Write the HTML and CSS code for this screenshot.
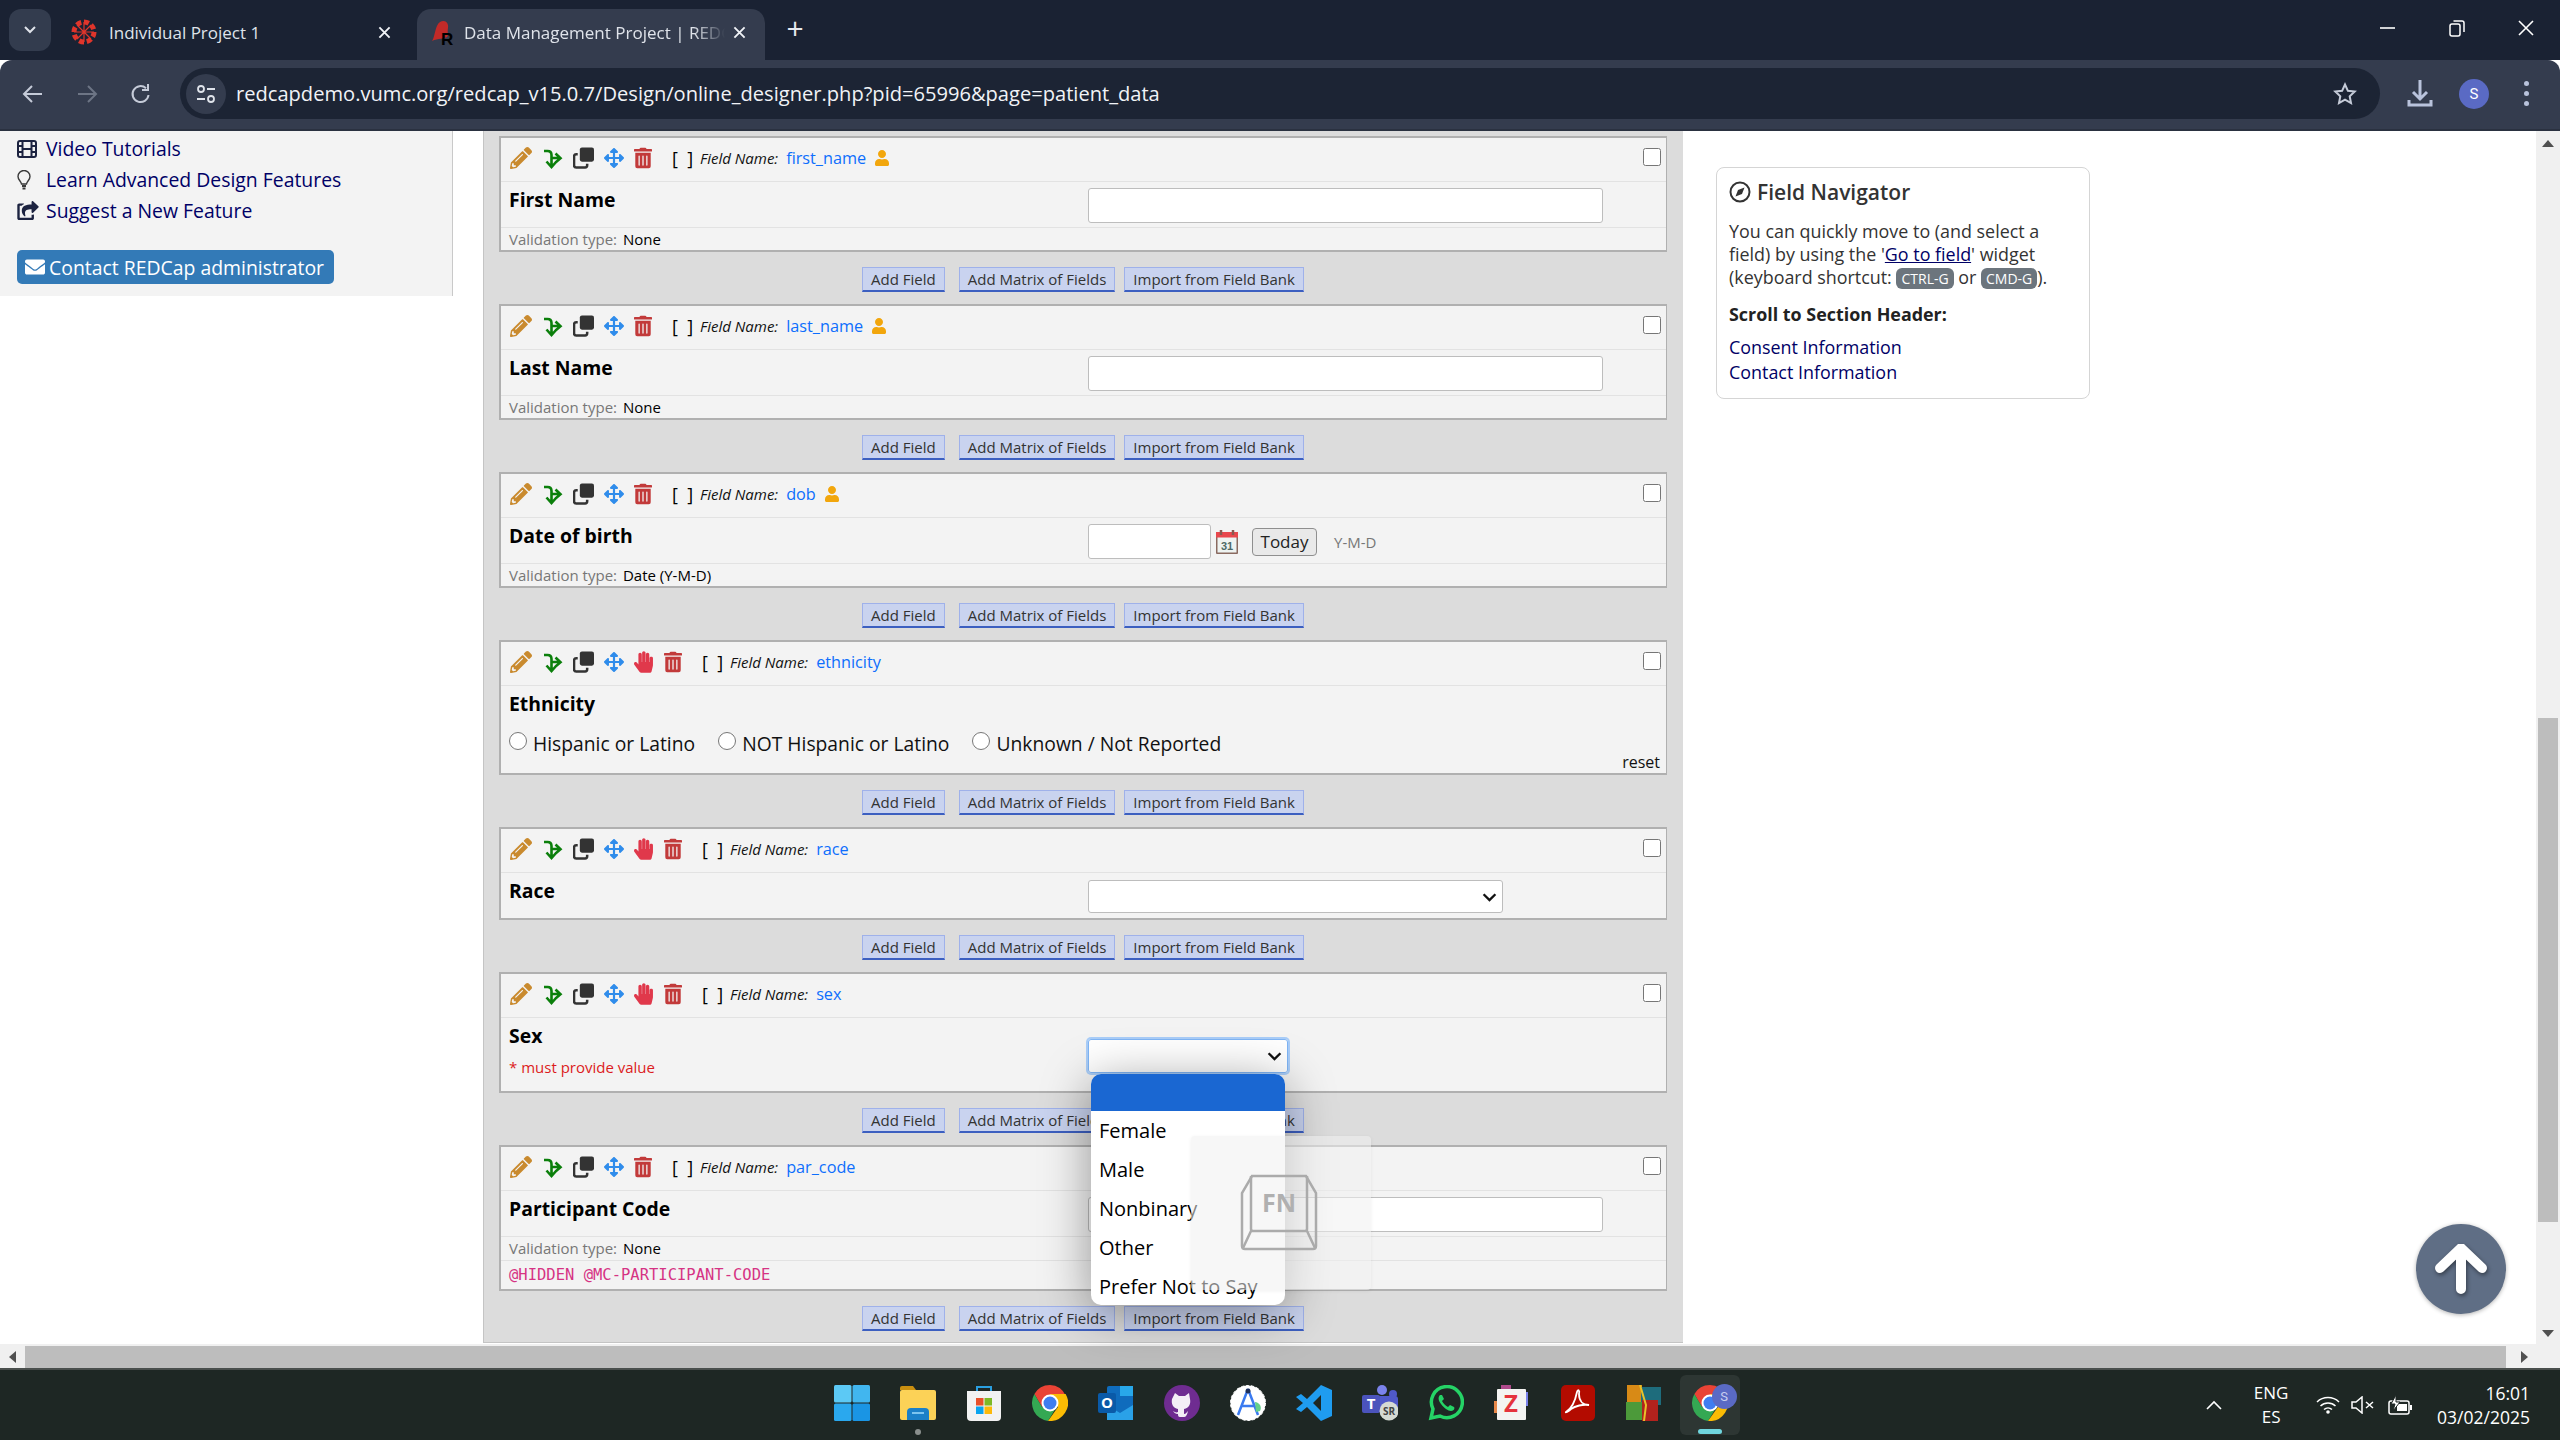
FILE: index.html
```html
<!DOCTYPE html>
<html>
    <head>
        <title>Data Management Project | REDCap</title>
        <link rel="stylesheet" href="styles.css">
    </head>
    <body>
<svg class="defs" width="0" height="0">
    <symbol id="i-pencil" viewBox="0 0 512 512"><path fill="#c98a2e" d="M497.9 142.1l-46.1 46.1c-4.7 4.7-12.3 4.7-17 0l-111-111c-4.7-4.7-4.7-12.3 0-17l46.1-46.1c18.7-18.7 49.1-18.7 67.9 0l60.1 60.1c18.8 18.7 18.8 49.1 0 67.9zM284.2 99.8L21.6 362.4.4 483.9c-2.9 16.4 11.4 30.6 27.8 27.8l121.5-21.3 262.6-262.6c4.7-4.7 4.7-12.3 0-17l-111-111c-4.8-4.7-12.4-4.7-17.1 0zM124.1 339.9c-5.5-5.5-5.5-14.3 0-19.8l154-154c5.5-5.5 14.3-5.5 19.8 0s5.5 14.3 0 19.8l-154 154c-5.5 5.5-14.3 5.5-19.8 0zM88 424h48v36.3l-64.5 11.3-31.1-31.1L51.7 376H88v48z"/></symbol>
    <symbol id="i-branch" viewBox="0 0 20 20"><path fill="none" stroke="#0b7f0b" stroke-width="2.6" d="M1 2h3.500Q8.500 2 8.500 6V17M3.500 12.500l5 5.500 5-5.500M8.500 9H17M12.500 4.500l5 4.700-5 4.300"/></symbol>
    <symbol id="i-copy" viewBox="0 0 20 20"><rect x="6.500" y="0" width="13.500" height="13.500" rx="2" fill="#333"/><path d="M4.500 6.500H3a2 2 0 0 0-2 2V17a2 2 0 0 0 2 2h8.500a2 2 0 0 0 2-2v-1.500" fill="none" stroke="#333" stroke-width="2.400"/></symbol>
    <symbol id="i-move" viewBox="0 0 512 512"><path fill="#2f8ceb" d="M352.201 425.775l-79.196 79.196c-9.373 9.373-24.568 9.373-33.941 0l-79.196-79.196c-15.119-15.119-4.411-40.971 16.971-40.97h51.162L228 284H127.196v51.162c0 21.382-25.851 32.09-40.971 16.971L7.029 272.937c-9.373-9.373-9.373-24.569 0-33.941L86.225 159.8c15.119-15.119 40.971-4.411 40.971 16.971V228H228V127.196h-51.23c-21.382 0-32.09-25.851-16.971-40.971l79.196-79.196c9.373-9.373 24.568-9.373 33.941 0l79.196 79.196c15.119 15.119 4.411 40.971-16.971 40.971h-51.162V228h100.804v-51.162c0-21.382 25.851-32.09 40.97-16.971l79.196 79.196c9.373 9.373 9.373 24.569 0 33.941L425.773 352.2c-15.119 15.119-40.971 4.411-40.97-16.971V284H284v100.804h51.23c21.382 0 32.09 25.851 16.971 40.971z"/></symbol>
    <symbol id="i-hand" viewBox="0 0 448 512"><path fill="#e0384b" d="M408.781 128.007C386.356 127.578 368 146.36 368 168.79V256h-8V79.79c0-22.43-18.356-41.212-40.781-40.783C297.488 39.423 280 57.169 280 79v177h-8V40.79C272 18.36 253.644-.422 231.219.007 209.488.423 192 18.169 192 40v216h-8V80.79c0-22.43-18.356-41.212-40.781-40.783C121.488 40.423 104 58.169 104 80v235.992l-31.648-43.519c-12.993-17.866-38.009-21.817-55.877-8.823-17.865 12.994-21.815 38.01-8.822 55.877l125.601 172.705A48 48 0 0 0 171.073 512h197.59c22.274 0 41.622-15.324 46.724-37.006l26.508-112.66a192.011 192.011 0 0 0 5.104-43.975V168c.001-21.831-17.487-39.577-39.218-39.993z"/></symbol>
    <symbol id="i-trash" viewBox="0 0 448 512"><path fill="#c23a3a" d="M32 464a48 48 0 0 0 48 48h288a48 48 0 0 0 48-48V128H32zm272-256a16 16 0 0 1 32 0v224a16 16 0 0 1-32 0zm-96 0a16 16 0 0 1 32 0v224a16 16 0 0 1-32 0zm-96 0a16 16 0 0 1 32 0v224a16 16 0 0 1-32 0zM432 32H312l-9.400-18.700A24 24 0 0 0 281.100 0H166.800a23.720 23.720 0 0 0-21.400 13.300L136 32H16A16 16 0 0 0 0 48v32a16 16 0 0 0 16 16h416a16 16 0 0 0 16-16V48a16 16 0 0 0-16-16z"/></symbol>
    <symbol id="i-user" viewBox="0 0 448 512"><path fill="#f2a60c" d="M224 256c70.700 0 128-57.300 128-128S294.700 0 224 0 96 57.300 96 128s57.300 128 128 128zm89.600 32h-16.700c-22.200 10.200-46.900 16-72.900 16s-50.600-5.800-72.900-16h-16.700C60.200 288 0 348.200 0 422.400V464c0 26.500 21.500 48 48 48h352c26.500 0 48-21.500 48-48v-41.600c0-74.200-60.200-134.400-134.400-134.400z"/></symbol>
    <symbol id="i-chrome" viewBox="0 0 36 36">
        <path fill="#ea4335" d="M18 0A18 18 0 0 0 2.400 9L10 22 18 10.500H33.600A18 18 0 0 0 18 0Z"/>
        <path fill="#34a853" d="M2.400 9A18 18 0 0 0 16 35.900L24.500 22 10 22Z"/>
        <path fill="#fbbc04" d="M33.600 9H18L26 22 16 35.900A18 18 0 0 0 33.600 9Z"/>
        <circle cx="18" cy="18" r="8.500" fill="#fff"/><circle cx="18" cy="18" r="6.500" fill="#3f7df0"/>
    </symbol>
    <symbol id="i-tabx" viewBox="0 0 14 14"><path d="M1.500 1.500l11 11M12.500 1.500l-11 11" stroke="#f1f3f7" stroke-width="2"/></symbol>
    <symbol id="i-chev" viewBox="0 0 14 10"><path d="M1.500 2l5.500 5.500L12.500 2" fill="none" stroke="#111" stroke-width="2.200"/></symbol>
</svg>

<div class="tabstrip">
    <div class="tablist"><svg width="14" height="14" viewBox="0 0 14 14"><path d="M2 4l5 5 5-5" fill="none" stroke="#dfe3ea" stroke-width="2"/></svg></div>
    <div class="tab">
        <svg class="favicon" width="26" height="26" viewBox="0 0 26 26"><circle cx="13" cy="13" r="10" fill="none" stroke="#e0352b" stroke-width="5" stroke-dasharray="5 2.800"/><path d="M13 3v20M3 13h20M6 6l14 14M20 6L6 20" stroke="#e0352b" stroke-width="1.200"/></svg>
        <span class="tab-title">Individual Project 1</span>
        <svg class="tab-x"><use href="#i-tabx"/></svg>
    </div>
    <div class="tab active">
        <svg class="favicon" width="26" height="26" viewBox="0 0 26 26"><path d="M2 22C5 18 5 6 10 3c5-3 9 1 8 6s1 7-1 9-9 1-15 4z" fill="#c22a28"/><text x="11" y="26" class="fav-r">R</text></svg>
        <span class="tab-title fade">Data Management Project | REDCap</span>
        <svg class="tab-x"><use href="#i-tabx"/></svg>
    </div>
    <div class="newtab">+</div>
    <div class="winctl">
        <svg width="16" height="16" viewBox="0 0 16 16"><path d="M0 8h15" stroke="#fff" stroke-width="1.600"/></svg>
        <svg width="16" height="18" viewBox="0 0 16 18"><rect x="1" y="5" width="10" height="12" rx="2" fill="none" stroke="#fff" stroke-width="1.500"/><path d="M4.500 2H13a2 2 0 0 1 2 2v9" fill="none" stroke="#fff" stroke-width="1.500"/></svg>
        <svg width="16" height="16" viewBox="0 0 16 16"><path d="M1 1l14 14M15 1L1 15" stroke="#fff" stroke-width="1.600"/></svg>
    </div>
</div>

<div class="toolbar">
    <svg class="nav" width="24" height="24" viewBox="0 0 24 24"><path d="M21 12H4M11 4l-8 8 8 8" fill="none" stroke="#c5cbd8" stroke-width="2"/></svg>
    <svg class="nav" width="24" height="24" viewBox="0 0 24 24"><path d="M3 12h17M13 4l8 8-8 8" fill="none" stroke="#6d7585" stroke-width="2"/></svg>
    <svg class="nav" width="24" height="24" viewBox="0 0 24 24"><path d="M19.500 13a8 8 0 1 1-2.500-6.800" fill="none" stroke="#c5cbd8" stroke-width="2"/><path d="M19 2v6h-6" fill="none" stroke="#c5cbd8" stroke-width="2"/></svg>
    <div class="omnibox">
        <span class="site-chip"><svg width="22" height="22" viewBox="0 0 22 22"><circle cx="6" cy="6" r="3" fill="none" stroke="#dfe3ea" stroke-width="1.800"/><path d="M12 6h8M2 16h8" stroke="#dfe3ea" stroke-width="1.800"/><circle cx="16" cy="16" r="3" fill="none" stroke="#dfe3ea" stroke-width="1.800"/></svg></span>
        <span class="url">redcapdemo.vumc.org/redcap_v15.0.7/Design/online_designer.php?pid=65996&amp;page=patient_data</span>
        <svg class="star" width="24" height="24" viewBox="0 0 24 24"><path d="M12 2.500l2.900 6.300 6.800.8-5 4.700 1.300 6.800-6-3.400-6 3.400 1.300-6.800-5-4.700 6.800-.8z" fill="none" stroke="#c5cbd8" stroke-width="2"/></svg>
    </div>
    <svg class="download" width="26" height="30" viewBox="0 0 26 30"><path d="M13 1v19M6 13l7 7 7-7" fill="none" stroke="#b9c3dc" stroke-width="3"/><path d="M2 21v5h22v-5" fill="none" stroke="#b9c3dc" stroke-width="3"/></svg>
    <span class="avatar">S</span>
    <span class="dots"><i></i><i></i><i></i></span>
</div>

<div class="page">
    <div class="sidebar">
        <div class="side-top">
            <div class="side-link"><span class="side-ico"></span>Help &amp; FAQ</div>
            <div class="side-link">
                <span class="side-ico"><svg width="20" height="18" viewBox="0 0 20 18"><rect x="1" y="1" width="18" height="16" rx="2" fill="none" stroke="#1c2340" stroke-width="2"/><path d="M5.500 1v16M14.500 1v16M1 6h4M1 12h4M15 6h4M15 12h4M6 9h8" stroke="#1c2340" stroke-width="2"/></svg></span>Video Tutorials
            </div>
            <div class="side-link">
                <span class="side-ico"><svg width="14" height="20" viewBox="0 0 14 20"><path d="M4.500 14C4 11 1 10 1 6.500a6 6 0 0 1 12 0C13 10 10 11 9.500 14z" fill="none" stroke="#3a3a3a" stroke-width="1.400"/><path d="M5 16h4M5.500 18.500h3" stroke="#3a3a3a" stroke-width="1.800"/></svg></span>Learn Advanced Design Features
            </div>
            <div class="side-link">
                <span class="side-ico"><svg width="22" height="19" viewBox="0 0 576 512"><path fill="#1c2340" d="M568.482 177.448L424.479 313.433C409.3 327.768 384 317.14 384 295.985v-71.963c-144.575.97-205.566 35.113-164.775 171.353 4.483 14.973-12.846 26.567-25.006 17.33C155.252 383.105 120 326.488 120 269.339c0-143.937 117.599-172.5 264-173.312V24.012c0-21.174 25.317-31.768 40.479-17.448l144.003 135.988c10.02 9.463 10.028 25.425 0 34.896zM384 379.128V448H64V128h50.916a11.990 11.990 0 0 0 8.648-3.693c14.953-15.568 32.237-27.890 51.014-37.676C186.708 80.069 182.238 64 170.239 64H48C21.490 64 0 85.490 0 112v352c0 26.510 21.490 48 48 48h352c26.510 0 48-21.490 48-48v-88.806c0-8.288-8.197-13.066-15.973-10.394-10.900 3.753-22.600 5.200-32.027 4.200-5.400-.600-16 .200-16 11.128z"/></svg></span>Suggest a New Feature
            </div>
            <div class="contact"><svg width="20" height="16" viewBox="0 64 512 384"><path fill="#fff" d="M502.300 190.800c3.900-3.100 9.700-.200 9.700 4.700V400c0 26.500-21.500 48-48 48H48c-26.500 0-48-21.500-48-48V195.600c0-5 5.700-7.800 9.700-4.700 22.400 17.400 52.100 39.500 154.100 113.600 21.100 15.400 56.700 47.800 92.200 47.600 35.700.300 72-32.800 92.300-47.600 102-74.100 131.600-96.300 154-113.700zM256 320c23.200.400 56.600-29.200 73.400-41.400 132.700-96.300 142.800-104.700 173.400-128.700 5.800-4.500 9.200-11.500 9.200-18.900v-19c0-26.500-21.500-48-48-48H48C21.500 64 0 85.500 0 112v19c0 7.400 3.400 14.300 9.200 18.900 30.600 23.900 40.700 32.400 173.400 128.700 16.800 12.200 50.200 41.800 73.400 41.400z"/></svg>Contact REDCap administrator</div>
        </div>
    </div>

    <div class="main">
        <div class="field">
            <div class="f-head">
                <svg class="i-pencil"><use href="#i-pencil"/></svg><svg class="i-branch"><use href="#i-branch"/></svg><svg class="i-copy"><use href="#i-copy"/></svg><svg class="i-move"><use href="#i-move"/></svg><svg class="i-trash"><use href="#i-trash"/></svg>
                <span class="brackets">[ &nbsp;]</span><em class="fn-label">Field Name:</em><span class="fn-var">first_name</span><svg class="i-user"><use href="#i-user"/></svg>
                <input class="f-check" type="checkbox">
            </div>
            <div class="f-body">
                <div class="f-label">First Name</div>
                <input class="txt" type="text">
            </div>
            <div class="f-valid"><span class="v-key">Validation type:</span> None</div>
        </div>
        <div class="add-row"><span class="add-btn">Add Field</span><span class="add-btn">Add Matrix of Fields</span><span class="add-btn">Import from Field Bank</span></div>

        <div class="field">
            <div class="f-head">
                <svg class="i-pencil"><use href="#i-pencil"/></svg><svg class="i-branch"><use href="#i-branch"/></svg><svg class="i-copy"><use href="#i-copy"/></svg><svg class="i-move"><use href="#i-move"/></svg><svg class="i-trash"><use href="#i-trash"/></svg>
                <span class="brackets">[ &nbsp;]</span><em class="fn-label">Field Name:</em><span class="fn-var">last_name</span><svg class="i-user"><use href="#i-user"/></svg>
                <input class="f-check" type="checkbox">
            </div>
            <div class="f-body">
                <div class="f-label">Last Name</div>
                <input class="txt" type="text">
            </div>
            <div class="f-valid"><span class="v-key">Validation type:</span> None</div>
        </div>
        <div class="add-row"><span class="add-btn">Add Field</span><span class="add-btn">Add Matrix of Fields</span><span class="add-btn">Import from Field Bank</span></div>

        <div class="field">
            <div class="f-head">
                <svg class="i-pencil"><use href="#i-pencil"/></svg><svg class="i-branch"><use href="#i-branch"/></svg><svg class="i-copy"><use href="#i-copy"/></svg><svg class="i-move"><use href="#i-move"/></svg><svg class="i-trash"><use href="#i-trash"/></svg>
                <span class="brackets">[ &nbsp;]</span><em class="fn-label">Field Name:</em><span class="fn-var">dob</span><svg class="i-user"><use href="#i-user"/></svg>
                <input class="f-check" type="checkbox">
            </div>
            <div class="f-body">
                <div class="f-label">Date of birth</div>
                <div class="date-wrap">
                    <input class="txt date" type="text">
                    <svg class="cal" width="22" height="24" viewBox="0 0 22 24"><rect x="0" y="2" width="22" height="22" rx="1" fill="#8a6a60"/><rect x="1.500" y="7" width="19" height="15.500" fill="#eef3f1"/><rect x="0" y="2" width="22" height="5.500" fill="#e8474c"/><path d="M5 0v5M17 0v5" stroke="#8a5a50" stroke-width="2.500"/><text x="11" y="19.500" class="cal-num">31</text></svg>
                    <span class="today">Today</span>
                    <span class="ymd">Y-M-D</span>
                </div>
            </div>
            <div class="f-valid"><span class="v-key">Validation type:</span> Date (Y-M-D)</div>
        </div>
        <div class="add-row"><span class="add-btn">Add Field</span><span class="add-btn">Add Matrix of Fields</span><span class="add-btn">Import from Field Bank</span></div>

        <div class="field">
            <div class="f-head">
                <svg class="i-pencil"><use href="#i-pencil"/></svg><svg class="i-branch"><use href="#i-branch"/></svg><svg class="i-copy"><use href="#i-copy"/></svg><svg class="i-move"><use href="#i-move"/></svg><svg class="i-hand"><use href="#i-hand"/></svg><svg class="i-trash"><use href="#i-trash"/></svg>
                <span class="brackets">[ &nbsp;]</span><em class="fn-label">Field Name:</em><span class="fn-var">ethnicity</span>
                <input class="f-check" type="checkbox">
            </div>
            <div class="f-body eth">
                <div class="f-label">Ethnicity</div>
                <div class="radios">
                    <label class="radio"><input type="radio" name="eth">Hispanic or Latino</label>
                    <label class="radio"><input type="radio" name="eth">NOT Hispanic or Latino</label>
                    <label class="radio"><input type="radio" name="eth">Unknown / Not Reported</label>
                </div>
                <span class="reset">reset</span>
            </div>
        </div>
        <div class="add-row"><span class="add-btn">Add Field</span><span class="add-btn">Add Matrix of Fields</span><span class="add-btn">Import from Field Bank</span></div>

        <div class="field">
            <div class="f-head">
                <svg class="i-pencil"><use href="#i-pencil"/></svg><svg class="i-branch"><use href="#i-branch"/></svg><svg class="i-copy"><use href="#i-copy"/></svg><svg class="i-move"><use href="#i-move"/></svg><svg class="i-hand"><use href="#i-hand"/></svg><svg class="i-trash"><use href="#i-trash"/></svg>
                <span class="brackets">[ &nbsp;]</span><em class="fn-label">Field Name:</em><span class="fn-var">race</span>
                <input class="f-check" type="checkbox">
            </div>
            <div class="f-body race">
                <div class="f-label">Race</div>
                <div class="sel-wrap race-sel"><select class="sel"><option></option></select><svg class="chev"><use href="#i-chev"/></svg></div>
            </div>
        </div>
        <div class="add-row"><span class="add-btn">Add Field</span><span class="add-btn">Add Matrix of Fields</span><span class="add-btn">Import from Field Bank</span></div>

        <div class="field">
            <div class="f-head">
                <svg class="i-pencil"><use href="#i-pencil"/></svg><svg class="i-branch"><use href="#i-branch"/></svg><svg class="i-copy"><use href="#i-copy"/></svg><svg class="i-move"><use href="#i-move"/></svg><svg class="i-hand"><use href="#i-hand"/></svg><svg class="i-trash"><use href="#i-trash"/></svg>
                <span class="brackets">[ &nbsp;]</span><em class="fn-label">Field Name:</em><span class="fn-var">sex</span>
                <input class="f-check" type="checkbox">
            </div>
            <div class="f-body sex">
                <div>
                    <div class="f-label">Sex</div>
                    <div class="must">* must provide value</div>
                </div>
                <div class="sel-wrap sex-sel"><select class="sel"><option></option></select><svg class="chev"><use href="#i-chev"/></svg></div>
            </div>
        </div>
        <div class="add-row"><span class="add-btn">Add Field</span><span class="add-btn">Add Matrix of Fields</span><span class="add-btn">Import from Field Bank</span></div>

        <div class="field">
            <div class="f-head">
                <svg class="i-pencil"><use href="#i-pencil"/></svg><svg class="i-branch"><use href="#i-branch"/></svg><svg class="i-copy"><use href="#i-copy"/></svg><svg class="i-move"><use href="#i-move"/></svg><svg class="i-trash"><use href="#i-trash"/></svg>
                <span class="brackets">[ &nbsp;]</span><em class="fn-label">Field Name:</em><span class="fn-var">par_code</span>
                <input class="f-check" type="checkbox">
            </div>
            <div class="f-body">
                <div class="f-label">Participant Code</div>
                <input class="txt" type="text">
            </div>
            <div class="f-valid mid"><span class="v-key">Validation type:</span> None</div>
            <div class="f-tags">@HIDDEN @MC-PARTICIPANT-CODE</div>
        </div>
        <div class="add-row"><span class="add-btn">Add Field</span><span class="add-btn">Add Matrix of Fields</span><span class="add-btn">Import from Field Bank</span></div>
    </div>

    <div class="navigator">
        <div class="nav-title"><svg width="22" height="22" viewBox="0 0 22 22"><circle cx="11" cy="11" r="9.500" fill="none" stroke="#333" stroke-width="2"/><path d="M15.500 6.500l-2.500 6.500-6.500 2.500 2.500-6.500z" fill="#333"/></svg>Field Navigator</div>
        <p class="nav-text">You can quickly move to (and select a field) by using the '<a class="goto">Go to field</a>' widget (keyboard shortcut: <span class="kbd">CTRL-G</span> or <span class="kbd">CMD-G</span>).</p>
        <div class="nav-head">Scroll to Section Header:</div>
        <div class="nav-link">Consent Information</div>
        <div class="nav-link">Contact Information</div>
    </div>

    <div class="vscroll">
        <span class="arrow-up"></span>
        <div class="v-track"><div class="v-thumb"></div></div>
        <span class="arrow-down"></span>
    </div>

    <div class="to-top"><svg width="52" height="50" viewBox="0 0 52 50"><path d="M26 4v41M5 24L26 4l21 20" fill="none" stroke="#fff" stroke-width="10" stroke-linecap="round" stroke-linejoin="round"/></svg></div>
</div>

<div class="hscroll">
    <span class="arrow-left"></span>
    <div class="h-thumb"></div>
    <span class="arrow-right"></span>
    <span class="corner"></span>
</div>

<div class="taskbar">
    <div class="apps">
        <svg class="app" viewBox="0 0 36 36"><rect x="0" y="0" width="17.500" height="17.500" rx="1.500" fill="#5cc9f5"/><rect x="18.500" y="0" width="17.500" height="17.500" rx="1.500" fill="#41b6ef"/><rect x="0" y="18.500" width="17.500" height="17.500" rx="1.500" fill="#2aa8ee"/><rect x="18.500" y="18.500" width="17.500" height="17.500" rx="1.500" fill="#1a95e4"/></svg>
        <svg class="app" viewBox="0 0 36 36"><path d="M0 3a2 2 0 0 1 2-2h11l3 4H0z" fill="#c98f10"/><rect x="0" y="5" width="36" height="30" rx="2" fill="#fcd257"/><path d="M7 35V27a4 4 0 0 1 4-4h14a4 4 0 0 1 4 4v8z" fill="#1b80c8"/><rect x="12" y="27" width="12" height="2" fill="#7cc4ef"/></svg>
        <svg class="app" viewBox="0 0 36 36"><path d="M11 7V2h14v5" fill="none" stroke="#2a9fe0" stroke-width="2"/><path d="M1 6h34v26a4 4 0 0 1-4 4H5a4 4 0 0 1-4-4z" fill="#f2f2f2"/><rect x="10" y="13" width="7.500" height="7.500" fill="#e8502a"/><rect x="18.500" y="13" width="7.500" height="7.500" fill="#7db927"/><rect x="10" y="21.500" width="7.500" height="7.500" fill="#0aa4ef"/><rect x="18.500" y="21.500" width="7.500" height="7.500" fill="#fcb90a"/></svg>
        <svg class="app"><use href="#i-chrome"/></svg>
        <svg class="app" viewBox="0 0 36 36"><rect x="9" y="1" width="26" height="34" rx="2" fill="#0f6cbd"/><rect x="22" y="1" width="13" height="10" fill="#28a8ea"/><path d="M9 20l13 8 13-8v15H9z" fill="#2aa1e8"/><rect x="0" y="8" width="18" height="20" rx="2" fill="#0a5aa8"/><text x="9" y="23" class="ol">O</text></svg>
        <svg class="app" viewBox="0 0 36 36"><circle cx="18" cy="18" r="18" fill="#6f2c91"/><path d="M11 8l4 3h6l4-3 1 6c1 5-1 9-6 10v5c2 0 2-1 4-3-1 4-2 6-4 6h-4c-2 0-2-2-2-3-3 0-4-2-5-3 2 1 3 2 5 1v-3c-5-1-7-5-6-10z" fill="#fff" fill-opacity=".92"/></svg>
        <svg class="app" viewBox="0 0 36 36"><circle cx="18" cy="18" r="17.500" fill="#fff" stroke="#fff" stroke-dasharray="3 2" stroke-width="1"/><path d="M18 4L8 30M18 4l10 26M11 21h14" fill="none" stroke="#3a7af0" stroke-width="2.500"/><circle cx="18" cy="6" r="2.500" fill="#1d2f5a"/><path d="M25 17a6 6 0 0 1 5 9l-4 1z" fill="#63d08a"/></svg>
        <svg class="app" viewBox="0 0 36 36"><path d="M25 0l11 5v26l-11 5-14-14-6 5-5-3 7-6-7-6 5-3 6 5zM25 10l-8 8 8 8z" fill="#1f9cf0" fill-rule="evenodd"/></svg>
        <svg class="app" viewBox="0 0 36 36"><circle cx="20" cy="5" r="5" fill="#7b83eb"/><circle cx="31" cy="9" r="4" fill="#5059c9"/><rect x="15" y="11" width="21" height="16" rx="3" fill="#5059c9"/><rect x="0" y="10" width="18" height="18" rx="2" fill="#4b53bc"/><text x="9" y="24" class="t-letter">T</text><circle cx="27" cy="26" r="9.500" fill="#d5dad3"/><text x="27" y="30" class="sr">SR</text></svg>
        <svg class="app" viewBox="0 0 36 36"><path d="M3 33l2-9A15.500 15.500 0 1 1 12 31z" fill="none" stroke="#25d366" stroke-width="3.500"/><path d="M12 10c-2 2-2 5 1 9s7 7 10 7 4-3 3-4l-4-2-2 2c-2-1-5-4-6-6l2-2-2-4z" fill="#25d366"/></svg>
        <svg class="app" viewBox="0 0 36 36"><rect x="7" y="0" width="10" height="8" fill="#b04a8c"/><rect x="28" y="7" width="6" height="14" fill="#7b83eb"/><rect x="0" y="16" width="6" height="12" fill="#e8894a"/><rect x="3" y="4" width="29" height="31" rx="1" fill="#f4f4f2"/><text x="17" y="27" class="zot">Z</text></svg>
        <svg class="app" viewBox="0 0 36 36"><rect x="1" y="0" width="34" height="36" rx="5" fill="#b30b00"/><path d="M6 27c5-3 9-10 11-20 1-3 3-2 2 2 0 8 5 11 10 11-6-1-14 1-18 4-3 3-6 4-5 3z" fill="none" stroke="#fff" stroke-width="1.800"/></svg>
        <svg class="app" viewBox="0 0 36 36"><rect x="1" y="0" width="15" height="18" fill="#d88a16"/><rect x="15" y="2" width="20" height="18" fill="#1e6c7c"/><rect x="0" y="17" width="17" height="18" fill="#4c9a3a"/><rect x="16" y="15" width="16" height="21" fill="#b2221d"/><path d="M14 0l6 20-2 16" stroke="#e8c22a" stroke-width="2" fill="none"/></svg>
        <div class="app-active">
            <svg class="app"><use href="#i-chrome"/></svg>
            <span class="app-badge">S</span>
            <span class="app-bar"></span>
        </div>
    </div>
    <span class="explorer-dot"></span>
    <div class="tray">
        <svg width="16" height="10" viewBox="0 0 16 10"><path d="M1 9l7-7 7 7" fill="none" stroke="#fff" stroke-width="1.600"/></svg>
        <div class="lang"><div>ENG</div><div>ES</div></div>
        <svg width="24" height="18" viewBox="0 0 24 18"><path d="M1 6a16 16 0 0 1 22 0M4.500 10a11 11 0 0 1 15 0M8 13.500a6 6 0 0 1 8 0" fill="none" stroke="#fff" stroke-width="1.500"/><circle cx="12" cy="16" r="1.800" fill="#fff"/></svg>
        <svg class="speaker" width="24" height="18" viewBox="0 0 24 18"><path d="M1 6h4l6-5v16l-6-5H1z" fill="none" stroke="#fff" stroke-width="1.500"/><path d="M15 6l7 6M22 6l-7 6" stroke="#fff" stroke-width="1.500"/></svg>
        <svg width="24" height="20" viewBox="0 0 24 20"><rect x="1" y="6" width="20" height="13" rx="2" fill="none" stroke="#fff" stroke-width="1.500"/><rect x="22" y="10" width="2" height="5" fill="#fff"/><rect x="9" y="9" width="10" height="7" fill="#fff"/><path d="M8 0L3 9h4l-2 7 7-9H8z" fill="#fff" stroke="#1e2724"/></svg>
        <div class="clock"><div>16:01</div><div>03/02/2025</div></div>
    </div>
</div>

<div class="dropdown">
    <div class="opt picked"></div>
    <div class="opt">Female</div>
    <div class="opt">Male</div>
    <div class="opt">Nonbinary</div>
    <div class="opt">Other</div>
    <div class="opt">Prefer Not to Say</div>
</div>

<div class="fn-ghost">
    <svg width="78" height="78" viewBox="0 0 78 78"><path d="M12 2H66L76 19V72Q76 75 73 75H5Q2 75 2 72V19Z" fill="none" stroke="#ababab" stroke-width="2.500"/><path d="M11 2V55a2 2 0 0 0 2 2H65a2 2 0 0 0 2-2V2M11 57L3 74M67 57l8 17" fill="none" stroke="#ababab" stroke-width="2.500"/><text x="39" y="38" class="fn-key">FN</text></svg>
</div>
    </body>
</html>
```

FILE: styles.css
```css
body {
    margin: 0;
    width: 2560px;
    height: 1440px;
    overflow: hidden;
    position: relative;
    display: flex;
    flex-direction: column;
    font-family: "Open Sans", "Liberation Sans", sans-serif;
    background: #fff;
}
.defs {
    position: absolute;
}

/* browser chrome */
.tabstrip {
    height: 60px;
    background: #1a2233;
    display: flex;
    align-items: flex-end;
    color: #dfe3ea;
    font-size: 17px;
}
.tablist {
    width: 42px;
    height: 42px;
    margin: 0 0 9px 9px;
    border-radius: 12px;
    background: #333c4e;
    display: flex;
    align-items: center;
    justify-content: center;
}
.tab {
    width: 366px;
    height: 51px;
    display: flex;
    align-items: center;
    padding: 0 26px 5px 20px;
    box-sizing: border-box;
    flex: none;
}
.tab.active {
    width: 348px;
    background: #343c4e;
    border-radius: 14px 14px 0 0;
    padding-left: 13px;
    padding-right: 19px;
}
.favicon {
    flex: none;
    margin-right: 12px;
}
.active .favicon {
    margin-right: 8px;
}
.fav-r {
    font: bold 17px "Liberation Sans", sans-serif;
    fill: #000;
}
.tab-title {
    flex: 1;
    white-space: nowrap;
    overflow: hidden;
}
.tab-title.fade {
    -webkit-mask-image: linear-gradient(to right, #000 88%, transparent);
    mask-image: linear-gradient(to right, #000 88%, transparent);
}
.tab-x {
    width: 13px;
    height: 13px;
    flex: none;
    margin-left: 8px;
}
.newtab {
    width: 36px;
    margin: 0 0 14px 12px;
    font-size: 30px;
    line-height: 36px;
    color: #e6e9ef;
    text-align: center;
}
.winctl {
    margin: 0 26px 23px auto;
    display: flex;
    gap: 53px;
    align-items: center;
}
.toolbar {
    height: 71px;
    box-sizing: border-box;
    background: #343c4e;
    border-bottom: 2px solid #2a3140;
    border-radius: 12px 12px 0 0;
    display: flex;
    align-items: center;
    padding: 0 20px 2px 21px;
}
.nav {
    flex: none;
    margin-right: 30px;
}
.nav:nth-child(3) {
    margin-right: 27px;
}
.omnibox {
    flex: none;
    width: 2200px;
    height: 51px;
    background: #1c2434;
    border-radius: 26px;
    display: flex;
    align-items: center;
    color: #f1f3f7;
    font-size: 20.100px;
}
.site-chip {
    width: 40px;
    height: 40px;
    margin-left: 6px;
    border-radius: 50%;
    background: #343c4e;
    display: flex;
    align-items: center;
    justify-content: center;
}
.url {
    margin-left: 10px;
}
.star {
    margin-left: auto;
    margin-right: 23px;
}
.download {
    margin-left: 27px;
}
.avatar {
    width: 30px;
    height: 30px;
    margin-left: 26px;
    border-radius: 50%;
    background: #5a6ac4;
    color: #fff;
    font: 15px Roboto, sans-serif;
    display: flex;
    align-items: center;
    justify-content: center;
}
.dots {
    margin-left: 35px;
    display: flex;
    flex-direction: column;
    gap: 5px;
}
.dots i {
    width: 5px;
    height: 5px;
    border-radius: 50%;
    background: #b9c3dc;
}

/* page */
.page {
    height: 1213px;
    position: relative;
    overflow: hidden;
    display: flex;
    align-items: flex-start;
}
.sidebar {
    width: 453px;
    flex: none;
}
.side-top {
    margin-top: -31px;
    height: 196px;
    background: #f3f3f3;
    border-right: 1px solid #c9c9c9;
    box-sizing: border-box;
    padding-top: 2px;
}
.side-link {
    height: 31px;
    line-height: 31px;
    font-size: 19.400px;
    color: #000066;
    display: flex;
    align-items: center;
}
.side-ico {
    width: 29px;
    margin-left: 17px;
    flex: none;
    display: flex;
    align-items: center;
}
.side-ico svg {
    display: block;
}
.contact {
    width: 317px;
    height: 34px;
    margin: 24px 0 0 17px;
    background: #337ab7;
    border-radius: 5px;
    color: #fff;
    font-size: 19.400px;
    display: flex;
    align-items: center;
    padding-left: 8px;
    box-sizing: border-box;
    gap: 4px;
}
.main {
    width: 1200px;
    height: 1212px;
    flex: none;
    margin-left: 30px;
    box-sizing: border-box;
    padding: 5px 16px 0 15px;
    background: #dcdcdc;
    border-bottom: 1px solid #c4c4c4;
    border-left: 1px solid #c4c4c4;
}
.field {
    background: #f3f3f3;
    border: 2px solid #b0b0b0;
    border-width: 2px 1px 2px 2px;
}
.f-head {
    height: 44px;
    box-sizing: border-box;
    border-bottom: 1px solid #e2e2e2;
    display: flex;
    align-items: center;
    padding: 0 0 3px 9px;
    font-size: 16px;
}
.f-head > svg {
    flex: none;
    height: 22px;
}
.i-pencil {
    width: 22px;
    margin-right: 11px;
}
.i-branch {
    width: 20px;
    margin-right: 10px;
    position: relative;
    top: 1px;
}
.i-copy {
    width: 21px;
    margin-right: 10px;
}
.i-move {
    width: 20px;
    margin-right: 10px;
}
.i-hand {
    width: 19px;
    margin-right: 11px;
}
.i-trash {
    width: 18px;
    margin-right: 20px;
}
.f-head > .i-user {
    width: 14px;
    height: 16px;
    margin-left: 9px;
}
.brackets {
    width: 28px;
    font-size: 18px;
    color: #000;
}
.fn-label {
    font-size: 15px;
    color: #111;
    margin-right: 8px;
}
.fn-var {
    color: #0d6efd;
    font-size: 16.250px;
}
.f-check {
    width: 18px;
    height: 18px;
    margin: 0 5px 3px auto;
}
.f-body {
    height: 46px;
    box-sizing: border-box;
    border-bottom: 1px solid #e2e2e2;
    display: flex;
    justify-content: space-between;
    padding: 0 0 0 8px;
    position: relative;
}
.f-label {
    font-size: 19.400px;
    font-weight: bold;
    color: #000;
    line-height: 27px;
    margin-top: 4px;
}
.txt {
    width: 515px;
    height: 35px;
    margin: 6px 63px 0 0;
    padding: 0;
    box-sizing: border-box;
    border: 1px solid #bdbdbd;
    border-radius: 3px;
    background: #fff;
}
.date-wrap {
    width: 578px;
    height: 35px;
    margin-top: 6px;
    display: flex;
    align-items: center;
}
.txt.date {
    width: 123px;
    margin: 0 5px 0 0;
}
.cal-num {
    font: bold 11px "Liberation Sans", sans-serif;
    fill: #4d6a66;
    text-anchor: middle;
}
.today {
    width: 65px;
    height: 28px;
    margin-left: 14px;
    box-sizing: border-box;
    border: 1px solid #8f8f8f;
    border-radius: 4px;
    background: #e9e9e9;
    font-size: 17px;
    line-height: 26px;
    text-align: center;
    color: #222;
}
.ymd {
    margin-left: 17px;
    font-size: 15px;
    color: #777;
}
.f-valid {
    height: 22px;
    padding-left: 8px;
    font-size: 15px;
    line-height: 22px;
    color: #000;
}
.f-valid.mid {
    height: 23px;
    border-bottom: 1px solid #e2e2e2;
}
.v-key {
    color: #777;
    margin-right: 2px;
}
.f-tags {
    height: 28px;
    padding-left: 8px;
    font: 15.500px/28px "DejaVu Sans Mono", "Liberation Mono", monospace;
    color: #d63384;
}
.f-body.eth {
    height: 83px;
    border-bottom: 0;
    display: block;
}
.radios {
    display: flex;
    margin-top: 13px;
    font-size: 19.300px;
    color: #111;
}
.radio {
    display: flex;
    align-items: center;
    margin-right: 23px;
    line-height: 27px;
}
.radio input {
    width: 18px;
    height: 18px;
    margin: 0 6px 5px 0;
}
.reset {
    position: absolute;
    right: 6px;
    bottom: 0;
    font-size: 16px;
    color: #111;
}
.f-body.race {
    height: 45px;
    border-bottom: 0;
}
.sel-wrap {
    position: relative;
    height: 33px;
}
.sel {
    width: 100%;
    height: 100%;
    display: block;
    appearance: none;
    box-sizing: border-box;
    border: 1px solid #bdbdbd;
    border-radius: 3px;
    background: #fff;
}
.chev {
    position: absolute;
    right: 6px;
    top: 12px;
    width: 15px;
    height: 11px;
}
.race-sel {
    width: 415px;
    margin: 7px 163px 0 0;
}
.f-body.sex {
    height: 73px;
    border-bottom: 0;
}
.sex-sel {
    width: 200px;
    height: 34px;
    margin: 21px 378px 0 0;
    border-radius: 3px;
    box-shadow: 0 0 0 2px #a9cdf8;
}
.sex-sel .sel {
    border-color: #7fb5f5;
}
.must {
    font-size: 15px;
    color: #dc1c1c;
    margin-top: 8px;
}
.add-row {
    height: 25px;
    margin: 15px 0 12px;
    display: flex;
    justify-content: center;
    font-size: 15px;
    color: #333;
}
.add-btn {
    height: 25px;
    box-sizing: border-box;
    padding: 0 8px;
    line-height: 23px;
    background: #c9d3ef;
    border: 1px solid #9fb1ea;
    border-bottom: 2px solid #3c5fc0;
    white-space: nowrap;
}
.add-btn:nth-child(2) {
    margin: 0 9px 0 14px;
}

/* field navigator */
.navigator {
    width: 374px;
    height: 232px;
    margin: 36px 0 0 33px;
    flex: none;
    box-sizing: border-box;
    border: 1px solid #d5d5d5;
    border-radius: 8px;
    padding: 9px 12px;
    font-size: 18px;
    color: #333;
}
.nav-title {
    display: flex;
    align-items: center;
    gap: 6px;
    font-size: 21px;
    font-weight: 600;
    line-height: 30px;
    color: #333;
}
.nav-text {
    margin: 13px 0 0;
    line-height: 23px;
    font-size: 17.900px;
    color: #333;
}
.goto {
    color: #000066;
    text-decoration: underline;
}
.kbd {
    background: #6c757d;
    color: #fff;
    font-size: 14px;
    border-radius: 6px;
    padding: 1px 5px;
}
.nav-head {
    margin-top: 12px;
    font-size: 17.900px;
    font-weight: bold;
    color: #222;
    line-height: 24px;
}
.nav-link {
    font-size: 17.900px;
    color: #000066;
    line-height: 25px;
}
.nav-head + .nav-link {
    margin-top: 9px;
}

/* scrollbars */
.vscroll {
    width: 24px;
    height: 100%;
    margin-left: auto;
    flex: none;
    background: #f0f0f0;
    display: flex;
    flex-direction: column;
    align-items: center;
}
.arrow-up, .arrow-down {
    width: 0;
    height: 0;
    margin: 9px 0 7px;
    border-left: 6px solid transparent;
    border-right: 6px solid transparent;
    border-bottom: 7px solid #505050;
}
.arrow-down {
    border-bottom: 0;
    border-top: 7px solid #505050;
}
.v-track {
    flex: 1;
    width: 20px;
}
.v-thumb {
    height: 504px;
    margin-top: 564px;
    background: #bdbdbd;
}
.to-top {
    position: absolute;
    left: 2416px;
    top: 1093px;
    width: 90px;
    height: 90px;
    border-radius: 50%;
    background: #5f6e85;
    box-shadow: 0 1px 4px rgba(0, 0, 0, .3);
    display: flex;
    align-items: center;
    justify-content: center;
}
.to-top svg {
    filter: drop-shadow(1px 2px 2px rgba(0, 0, 0, .45));
}
.hscroll {
    height: 24px;
    box-sizing: border-box;
    background: #f0f0f0;
    padding-top: 2px;
    display: flex;
    align-items: center;
}
.arrow-left, .arrow-right {
    width: 0;
    height: 0;
    flex: none;
    border-top: 6px solid transparent;
    border-bottom: 6px solid transparent;
    border-right: 7px solid #505050;
    margin: 0 9px;
}
.arrow-right {
    border-right: 0;
    border-left: 7px solid #505050;
    margin: 0 0 0 15px;
}
.h-thumb {
    width: 2481px;
    height: 100%;
    background: #bdbdbd;
    flex: none;
}
.corner {
    width: 24px;
    height: 100%;
    margin-left: auto;
    background: #f0f0f0;
}

/* taskbar */
.taskbar {
    height: 72px;
    flex: none;
    box-sizing: border-box;
    background: #1e2724;
    border-top: 2px solid #4a4f4d;
    position: relative;
    display: flex;
    justify-content: center;
}
.apps {
    display: flex;
    align-items: center;
    gap: 30px;
    margin-left: 1px;
}
.app {
    width: 36px;
    height: 36px;
    flex: none;
    margin-bottom: 4px;
}
.ol, .t-letter, .sr, .zot {
    font-family: "Open Sans", sans-serif;
    text-anchor: middle;
    font-weight: bold;
}
.ol, .t-letter {
    fill: #fff;
    font-size: 15px;
}
.sr {
    fill: #444;
    font-size: 10px;
}
.zot {
    fill: #e5333d;
    font-size: 24px;
}
.app-active {
    width: 60px;
    height: 60px;
    margin: 0 -12px;
    border-radius: 6px;
    background: #2d3633;
    display: flex;
    align-items: center;
    justify-content: center;
    position: relative;
}
.app-badge {
    position: absolute;
    right: 3px;
    top: 9px;
    width: 25px;
    height: 25px;
    border-radius: 50%;
    background: #5a6ac4;
    color: #c8cef0;
    font: 13px Roboto, sans-serif;
    text-align: center;
    line-height: 25px;
}
.app-bar {
    position: absolute;
    left: 18px;
    bottom: 1px;
    width: 24px;
    height: 5px;
    border-radius: 3px;
    background: #6fd6de;
}
.explorer-dot {
    position: absolute;
    left: 915px;
    top: 59px;
    width: 6px;
    height: 6px;
    border-radius: 50%;
    background: #8a8f8d;
}
.tray {
    position: absolute;
    right: 30px;
    top: 0;
    height: 70px;
    display: flex;
    align-items: center;
    color: #fff;
    font-size: 17.500px;
    line-height: 24px;
}
.tray > svg {
    flex: none;
}
.lang {
    width: 50px;
    margin: 0 20px 0 24px;
    text-align: center;
    font-size: 17px;
}
.speaker {
    margin: 0 13px 0 11px;
}
.clock {
    margin-left: 25px;
    text-align: right;
}

/* things lying over the page */
.dropdown {
    position: absolute;
    left: 1091px;
    top: 1074px;
    width: 194px;
    height: 231px;
    background: #fff;
    border-radius: 10px;
    overflow: hidden;
    box-shadow: 0 8px 50px rgba(0, 0, 0, .4);
}
.opt {
    height: 39px;
    line-height: 39px;
    padding-left: 8px;
    font-size: 20px;
    color: #000;
    white-space: nowrap;
}
.opt.picked {
    height: 37px;
    background: #1a67d2;
}
.fn-ghost {
    position: absolute;
    left: 1191px;
    top: 1136px;
    width: 180px;
    height: 154px;
    background: rgba(240, 240, 240, .55);
    border-radius: 4px;
    box-shadow: 0 1px 4px rgba(0, 0, 0, .06);
    display: flex;
    align-items: center;
    justify-content: center;
    padding-right: 4px;
    box-sizing: border-box;
}
.fn-key {
    font: bold 25px "Open Sans", sans-serif;
    fill: #b0b0b0;
    text-anchor: middle;
}
```
